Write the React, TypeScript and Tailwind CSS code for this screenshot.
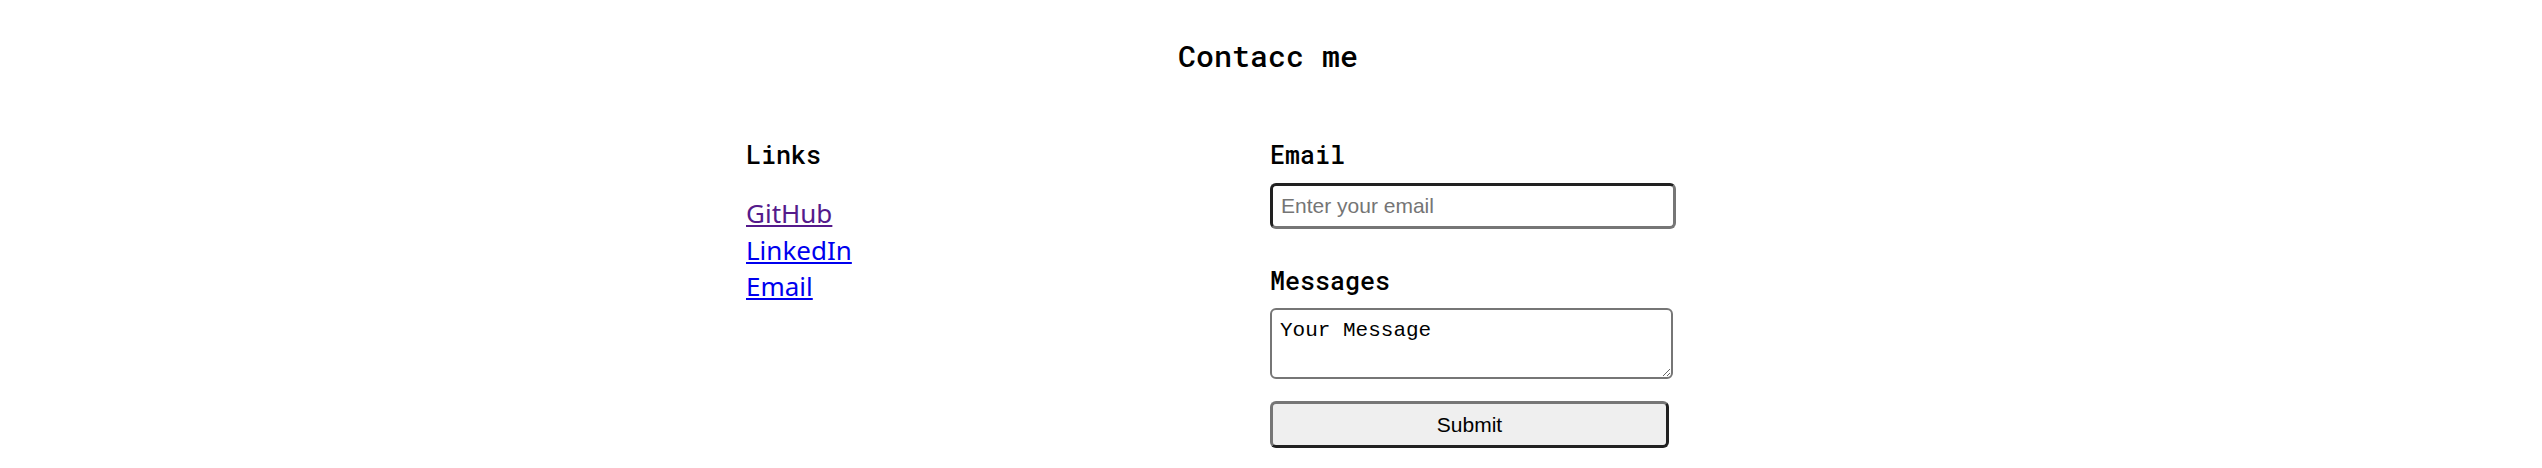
import { useState } from "react";

const mono = "font-['Roboto_Mono','DejaVu_Sans_Mono',monospace]";

const links = [
  { label: "GitHub", href: "#github", visited: true },
  { label: "LinkedIn", href: "#linkedin", visited: false },
  { label: "Email", href: "#email", visited: false },
];

const App = () => {
  const [email, setEmail] = useState("");
  const [message, setMessage] = useState("Your Message");

  const handleSubmit = (e: React.FormEvent<HTMLFormElement>) => {
    e.preventDefault();
  };

  return (
    <div className="w-full min-h-[468px] bg-white text-black">
      <h1 className={`${mono} text-center pt-[36px] pr-[6px] text-[30px] leading-[40px] font-medium`}>
        Contacc me
      </h1>

      <div className="grid grid-cols-[524px_1fr] w-[1050px] mx-auto mt-[63px]">
        <div>
          <h2 className={`${mono} text-[25px] leading-[32px] font-medium`}>Links</h2>
          <ul className="mt-[24px] font-['Noto_Sans',sans-serif] text-[26px] leading-[36.5px]">
            {links.map((l) => (
              <li key={l.label}>
                <a
                  href={l.href}
                  className={`underline ${l.visited ? "text-[#551a8b]" : "text-[#0000ee]"}`}
                >
                  {l.label}
                </a>
              </li>
            ))}
          </ul>
        </div>

        <form onSubmit={handleSubmit} className="flex flex-col items-start">
          <label htmlFor="email" className={`${mono} text-[25px] leading-[32px] font-medium`}>
            Email
          </label>
          <input
            id="email"
            type="email"
            value={email}
            onChange={(e) => setEmail(e.target.value)}
            placeholder="Enter your email"
            className="mt-[12px] w-[406px] h-[46px] px-[8px] rounded-[6px] border-[3px] border-t-[#212121] border-l-[#212121] border-b-[#767676] border-r-[#767676] font-['Liberation_Sans',Arial,sans-serif] text-[21px] placeholder:text-[#757575] outline-none"
          />

          <label htmlFor="message" className={`${mono} mt-[36px] text-[25px] leading-[32px] font-medium`}>
            Messages
          </label>
          <textarea
            id="message"
            value={message}
            onChange={(e) => setMessage(e.target.value)}
            className="mt-[11px] w-[403px] h-[71px] px-[8px] py-[9px] rounded-[6px] border-2 border-[#767676] font-['Liberation_Mono',monospace] text-[21px] leading-[24px] outline-none"
          />

          <button
            type="submit"
            className="mt-[22px] w-[399px] h-[47px] rounded-[6px] bg-[#efefef] border-[3px] border-t-[#767676] border-l-[#767676] border-b-[#212121] border-r-[#212121] font-['Liberation_Sans',Arial,sans-serif] text-[21px]"
          >
            Submit
          </button>
        </form>
      </div>
    </div>
  );
};

export default App;
